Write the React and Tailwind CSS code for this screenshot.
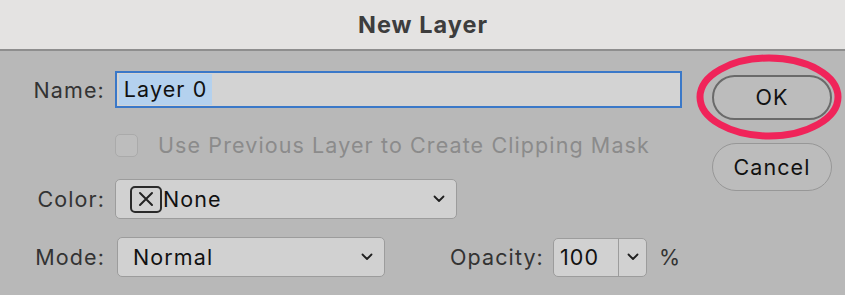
import React from 'react';

const Chevron = ({ className = '' }) => (
    <svg width="12" height="8" viewBox="0 0 12 8" className={className}>
        <path d="M1.5 1.5 L6 6 L10.5 1.5" fill="none" stroke="#1f1f1f" strokeWidth="1.8" strokeLinecap="round" strokeLinejoin="round" />
    </svg>
);

const App = () => {
    return (
        <div className="w-[845px] h-[295px] bg-[#b8b8b8] text-[21.5px] tracking-[1.1px] text-[#333] overflow-hidden relative" style={{ fontFamily: 'Inter, "Liberation Sans", sans-serif' }}>
            {/* title bar */}
            <div className="h-[51px] bg-[#e4e3e2] border-b-2 border-[#8e8e8e] flex items-center justify-center">
                <h1 className="text-[23.5px] font-bold text-[#3d3d3d] tracking-[1px] pl-[1px]">New Layer</h1>
            </div>

            <div className="flex pt-[20px]">
                {/* form */}
                <div className="flex flex-col w-[682px] shrink-0">
                    {/* name */}
                    <div className="flex items-center h-[37px]">
                        <label className="w-[105px] text-right pt-[1px]">Name:</label>
                        <div className="ml-[10px] w-[568px] h-[37px] bg-[#d3d3d3] border-2 border-[#3a78c8] flex items-center pl-[2px]">
                            <span className="bg-[#b4d1ee] text-[#111] px-[5px] leading-[31px]">Layer 0</span>
                        </div>
                    </div>

                    {/* clipping mask */}
                    <div className="flex items-center h-[24px] mt-[25px] ml-[115px]">
                        <div className="w-[23px] h-[23px] rounded-[5px] border border-[#aaaaaa] bg-[#bdbdbd]" />
                        <span className="ml-[20px] text-[#8b8b8b]">Use Previous Layer to Create Clipping Mask</span>
                    </div>

                    {/* color */}
                    <div className="flex items-center h-[40px] mt-[22px]">
                        <label className="w-[105px] text-right">Color:</label>
                        <div className="ml-[10px] w-[342px] h-[40px] bg-[#d1d1d1] border border-[#9c9c9c] rounded-[5px] flex items-center pl-[14px] pr-[10px]">
                            <div className="w-[32px] h-[27px] rounded-[5px] border-2 border-[#2a2a2a] flex items-center justify-center shrink-0">
                                <svg width="16" height="16" viewBox="0 0 16 16">
                                    <path d="M2 2 L14 14 M14 2 L2 14" stroke="#222" strokeWidth="2" strokeLinecap="round" />
                                </svg>
                            </div>
                            <span className="text-[#111] ml-[1px]">None</span>
                            <Chevron className="ml-auto mr-[1px]" />
                        </div>
                    </div>

                    {/* mode + opacity */}
                    <div className="flex items-center h-[40px] mt-[18px]">
                        <label className="w-[105px] text-right">Mode:</label>
                        <div className="ml-[12px] w-[268px] h-[40px] bg-[#d1d1d1] border border-[#9c9c9c] rounded-[5px] flex items-center pl-[15px] pr-[10px]">
                            <span className="text-[#111]">Normal</span>
                            <Chevron className="ml-auto mr-[1px]" />
                        </div>

                        <label className="ml-[65px] w-[93px]">Opacity:</label>
                        <div className="ml-[10px] w-[94px] h-[39px] bg-[#d1d1d1] border border-[#9c9c9c] rounded-[5px] flex items-center">
                            <span className="text-[#111] pl-[6px] w-[64px]">100</span>
                            <div className="h-full border-l border-[#9c9c9c] flex-1 flex items-center justify-center">
                                <Chevron />
                            </div>
                        </div>
                        <span className="ml-[12px]">%</span>
                    </div>
                </div>

                {/* buttons */}
                <div className="flex flex-col ml-[30px] pt-[4px]">
                    <button className="w-[120px] h-[45px] rounded-full border-2 border-[#6a6a6a] bg-[#bcbcbc] text-[#111]">OK</button>
                    <button className="w-[120px] h-[48px] mt-[23px] rounded-full border border-[#979797] bg-[#bcbcbc] text-[#111]">Cancel</button>
                </div>
            </div>

            {/* red highlight ring */}
            <svg className="absolute left-[694px] top-[53px]" width="150" height="88" viewBox="0 0 150 88">
                <ellipse cx="75" cy="44" rx="69" ry="39" fill="none" stroke="#f0245a" strokeWidth="7" />
            </svg>
        </div>
    );
};

export default App;
